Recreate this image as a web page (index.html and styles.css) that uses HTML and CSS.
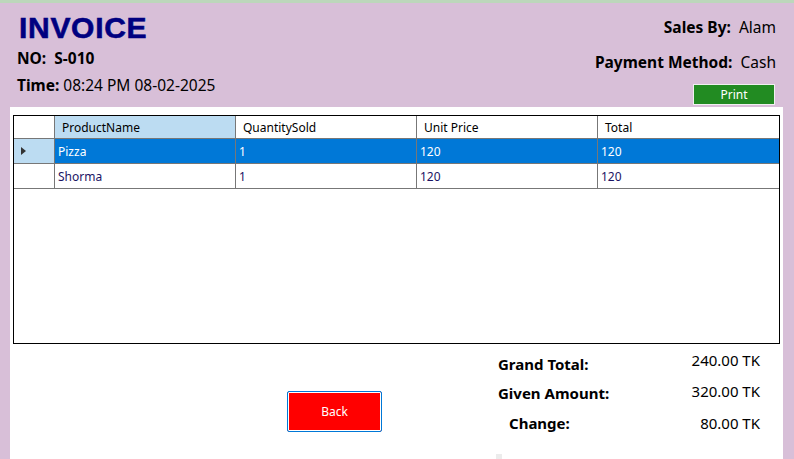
FILE: index.html
```html
<!DOCTYPE html>
<html>
<head>
<meta charset="utf-8">
<link rel="stylesheet" href="styles.css">
</head>
<body>
<div class="strip"></div>
<div class="top">
  <div class="left">
    <h1 class="title">INVOICE</h1>
    <div class="line no"><b>NO:&nbsp; S-010</b></div>
    <div class="line time"><b>Time:</b> 08:24 PM 08-02-2025</div>
  </div>
  <div class="right">
    <div class="line sales"><b>Sales By:</b>&nbsp; Alam</div>
    <div class="line pay"><b>Payment Method:</b>&nbsp; Cash</div>
    <button class="print">Print</button>
  </div>
</div>
<div class="panel">
  <div class="grid">
    <div class="row head">
      <div class="cell rh"></div>
      <div class="cell hc sel-head">ProductName</div>
      <div class="cell hc">QuantitySold</div>
      <div class="cell hc">Unit Price</div>
      <div class="cell hc last">Total</div>
    </div>
    <div class="row body selected">
      <div class="cell rh cur"><span class="tri"></span></div>
      <div class="cell">Pizza</div>
      <div class="cell">1</div>
      <div class="cell">120</div>
      <div class="cell last">120</div>
    </div>
    <div class="row body">
      <div class="cell rh"></div>
      <div class="cell">Shorma</div>
      <div class="cell">1</div>
      <div class="cell">120</div>
      <div class="cell last">120</div>
    </div>
  </div>
  <div class="bottom">
    <div class="back-wrap"><button class="back">Back</button></div>
    <div class="labels">
      <div class="lbl l1">Grand Total:</div>
      <div class="lbl l2">Given Amount:</div>
      <div class="lbl l3">Change:</div>
    </div>
    <div class="values">
      <div class="val v1">240.00 TK</div>
      <div class="val v2">320.00 TK</div>
      <div class="val v3">80.00 TK</div>
    </div>
  </div>
  <div class="nub"></div>
</div>
</body>
</html>
```
FILE: styles.css
```css
html, body {
  margin: 0;
  padding: 0;
}
body {
  width: 794px;
  height: 459px;
  overflow: hidden;
  background: #d8bfd8;
  font-family: "Segoe UI", "Noto Sans", "Open Sans", sans-serif;
  color: #000;
}
.strip {
  height: 3px;
  background: #bcd7bb;
}
.top {
  display: flex;
  justify-content: space-between;
  height: 104px;
}
.left {
  padding-left: 17px;
}
.title {
  margin: 10px 0 0 2px;
  font-family: "Liberation Sans", Arial, sans-serif;
  font-weight: 900;
  font-size: 30px;
  line-height: 30px;
  color: #000080;
  letter-spacing: 0.7px;
  -webkit-text-stroke: 0.6px #000080;
}
.line {
  font-size: 15.5px;
  line-height: 20px;
  white-space: nowrap;
}
.no { margin-top: 5px; }
.time { margin-top: 7px; }
.right {
  display: flex;
  flex-direction: column;
  align-items: flex-end;
  padding-right: 18px;
}
.sales { margin-top: 14px; }
.pay { margin-top: 15px; }
.print {
  margin: 12px 1px 0 0;
  width: 82px;
  height: 21px;
  padding: 0;
  background: #228b22;
  border: 1px solid #f0f0f0;
  color: #fff;
  font-family: inherit;
  font-size: 12px;
  line-height: 17px;
}
.panel {
  position: relative;
  margin: 0 11px 0 10px;
  height: 352px;
  background: #fff;
  padding: 8px 0 0 3px;
  box-sizing: border-box;
}
.grid {
  width: 767px;
  height: 229px;
  box-sizing: border-box;
  border: 1px solid #000;
  background: #fff;
}
.row {
  display: grid;
  grid-template-columns: 41px 181px 181px 181px 1fr;
  border-bottom: 1px solid #777;
  box-sizing: border-box;
  font-size: 12px;
}
.row.head { height: 23px; }
.row.body { height: 25px; color: #1b1464; }
.cell {
  border-right: 1px solid #777;
  display: flex;
  align-items: center;
  padding-left: 3px;
  white-space: nowrap;
  overflow: hidden;
}
.cell.last { border-right: none; }
.cell.hc { padding-left: 7px; color: #000; }
.sel-head { background: #bcdcf2; }
.rh { padding-left: 7px; }
.row.body.selected { color: #fff; }
.selected .cell { background: #0078d7; }
.selected .cell.cur { background: #bcdcf2; }
.tri {
  width: 0;
  height: 0;
  border-top: 4px solid transparent;
  border-bottom: 4px solid transparent;
  border-left: 5px solid #333;
}
.bottom {
  display: flex;
  align-items: flex-start;
}
.back-wrap {
  margin: 47px 0 0 274px;
}
.back {
  display: block;
  width: 95px;
  height: 41px;
  padding: 0;
  border: 1px solid #0078d7;
  border-radius: 2px;
  background: #f00;
  box-shadow: inset 0 0 0 1px #fff;
  color: #fff;
  font-family: inherit;
  font-size: 12px;
}
.labels {
  margin-left: 116px;
  width: 130px;
  font-size: 15px;
  font-weight: bold;
  line-height: 20px;
}
.l1 { margin-top: 10px; }
.l2 { margin-top: 9px; }
.l3 { margin-top: 10px; padding-left: 11px; }
.values {
  width: 132px;
  text-align: right;
  font-size: 15px;
  line-height: 20px;
}
.v1 { margin-top: 6px; }
.v2 { margin-top: 11px; }
.v3 { margin-top: 12px; }
.nub {
  position: absolute;
  left: 486px;
  bottom: 0;
  width: 6px;
  height: 5px;
  background: #ececec;
}
```
